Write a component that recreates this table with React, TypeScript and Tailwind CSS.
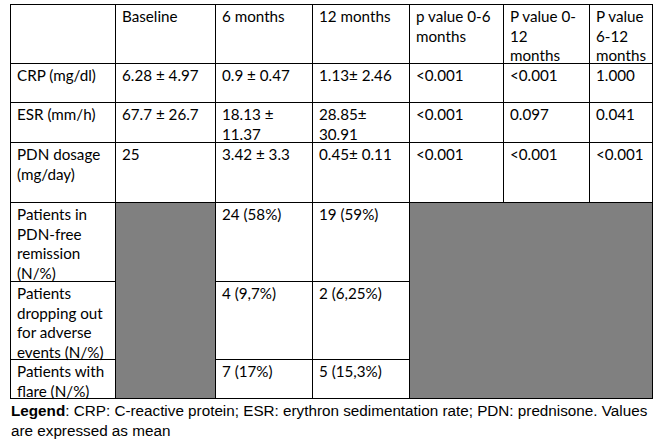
const cell = 'border-r border-b border-black pl-[6px] pt-[2px] whitespace-nowrap';
const gray = 'border-r border-b border-black bg-[#808080]';

function Lines({ lines }: { lines: string[] }) {
  return (
    <>
      {lines.map((l, i) => (
        <div key={i}>{l}</div>
      ))}
    </>
  );
}

const header = [
  [''],
  ['Baseline'],
  ['6 months'],
  ['12 months'],
  ['p value 0-6', 'months'],
  ['P value 0-', '12', 'months'],
  ['P value', '6-12', 'months'],
];

const dataRows: string[][][] = [
  [['CRP (mg/dl)'], ['6.28 ± 4.97'], ['0.9 ± 0.47'], ['1.13± 2.46'], ['<0.001'], ['<0.001'], ['1.000']],
  [['ESR (mm/h)'], ['67.7 ± 26.7'], ['18.13 ±', '11.37'], ['28.85±', '30.91'], ['<0.001'], ['0.097'], ['0.041']],
  [['PDN dosage', '(mg/day)'], ['25'], ['3.42 ± 3.3'], ['0.45± 0.11'], ['<0.001'], ['<0.001'], ['<0.001']],
];

export default function App() {
  return (
    <div className="w-[665px] h-[441px] bg-white text-black overflow-hidden">
      {/* table */}
      <div
        className="ml-[10px] mt-[4px] grid w-fit border-l border-t border-black grid-cols-[105px_100px_97px_97px_94px_86px_63px] grid-rows-[59px_39px_40px_60px_79px_78px_39px] text-[15.2px] leading-[19.5px] text-black"
        style={{ fontFamily: 'Lato, "Liberation Sans", sans-serif' }}
      >
        {header.map((h, i) => (
          <div key={i} className={cell}>
            <Lines lines={h} />
          </div>
        ))}

        {dataRows.map((row, r) =>
          row.map((c, i) => (
            <div key={`${r}-${i}`} className={cell}>
              <Lines lines={c} />
            </div>
          ))
        )}

        {/* patient rows */}
        <div className={cell}>
          <Lines lines={['Patients in', 'PDN-free', 'remission', '(N/%)']} />
        </div>
        <div className={`${gray} row-span-3`} />
        <div className={cell}>24 (58%)</div>
        <div className={cell}>19 (59%)</div>
        <div className={`${gray} row-span-3 col-span-3`} />

        <div className={cell}>
          <Lines lines={['Patients', 'dropping out', 'for adverse', 'events (N/%)']} />
        </div>
        <div className={cell}>4 (9,7%)</div>
        <div className={cell}>2 (6,25%)</div>

        <div className={cell}>
          <Lines lines={['Patients with', 'flare (N/%)']} />
        </div>
        <div className={cell}>7 (17%)</div>
        <div className={cell}>5 (15,3%)</div>
      </div>

      {/* legend */}
      <div
        className="pl-[11px] pt-[2px] text-[15.25px] leading-[20px] whitespace-nowrap"
        style={{ fontFamily: '"Liberation Sans", Arial, sans-serif' }}
      >
        <div>
          <span className="font-bold">Legend</span>: CRP: C-reactive protein; ESR: erythron sedimentation rate; PDN: prednisone. Values
        </div>
        <div>are expressed as mean</div>
      </div>
    </div>
  );
}
